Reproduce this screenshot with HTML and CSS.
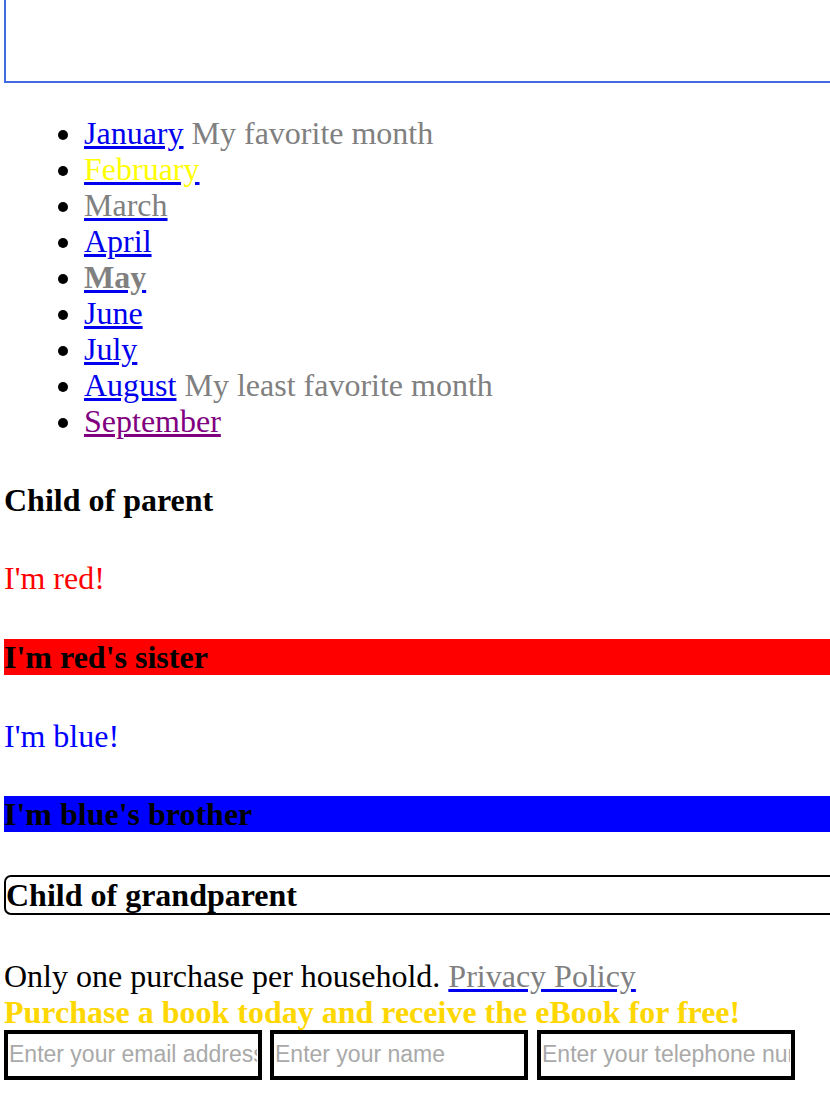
FILE: index.html
```html
<!DOCTYPE html>
<html>
<head>
<meta charset="utf-8">
<title>Selectors</title>
<link rel="stylesheet" href="styles.css">
</head>
<body>
<div class="frame"></div>
<ul class="months">
  <li><a href="#">January</a> <span class="muted">My favorite month</span></li>
  <li><a href="#"><span class="yellow">February</span></a></li>
  <li><a href="#"><span class="muted">March</span></a></li>
  <li><a href="#">April</a></li>
  <li><a href="#"><strong class="muted">May</strong></a></li>
  <li><a href="#">June</a></li>
  <li><a href="#">July</a></li>
  <li><a href="#">August</a> <span class="muted">My least favorite month</span></li>
  <li><a href="#" class="visited">September</a></li>
</ul>
<div class="grandparent">
  <div class="parent">
    <h4>Child of parent</h4>
    <p class="red">I'm red!</p>
    <h4 class="red-bg">I'm red's sister</h4>
    <p class="blue">I'm blue!</p>
    <h4 class="blue-bg">I'm blue's brother</h4>
  </div>
  <h4 class="boxed">Child of grandparent</h4>
</div>
<p class="notice">Only one purchase per household. <a href="#"><span class="muted">Privacy Policy</span></a><br><strong class="gold">Purchase a book today and receive the eBook for free!</strong></p>
<form class="signup">
  <input type="email" placeholder="Enter your email address">
  <input type="text" placeholder="Enter your name">
  <input type="tel" class="phone" placeholder="Enter your telephone number">
</form>
</body>
</html>
```
FILE: styles.css
```css
html {
  overflow: hidden;
}

body {
  margin: 0 0 0 4px;
  width: 900px;
  font-family: "Liberation Serif", "Times New Roman", serif;
  font-size: 32px;
  line-height: 36px;
  color: #000;
  background: #fff;
}

.frame {
  height: 81px;
  border: 2px solid #4169e1;
  border-top: none;
}

.months {
  margin: 32px 0;
  padding-left: 80px;
  list-style: disc;
}

a {
  color: #0000ee;
  text-decoration: underline;
}

a.visited {
  color: #800080;
}

.muted {
  color: #808080;
}

.yellow {
  color: #ffff00;
}

h4 {
  font-size: 32px;
  font-weight: bold;
  line-height: 36px;
  margin: 42.67px 0;
}

p {
  margin: 32px 0;
}

.red {
  color: #ff0000;
}

.blue {
  color: #0000ff;
}

.red-bg {
  background: #ff0000;
}

.blue-bg {
  background: #0000ff;
}

.boxed {
  border: 2px solid #000;
  border-radius: 7px;
}

.notice {
  margin-bottom: 0;
}

.gold {
  color: #ffd700;
}

.signup {
  display: flex;
  gap: 8px;
  margin: 0;
}

.signup input {
  box-sizing: border-box;
  width: 258px;
  height: 50px;
  margin: 0;
  padding: 0 1px;
  border: 4px solid #000;
  border-radius: 0;
  font-family: "Liberation Sans", Arial, sans-serif;
  font-size: 23px;
  color: #000;
  background: #fff;
  outline: none;
}

.signup input::placeholder {
  color: #a9a9a9;
}

.signup .phone {
  margin-left: 1px;
}
```
